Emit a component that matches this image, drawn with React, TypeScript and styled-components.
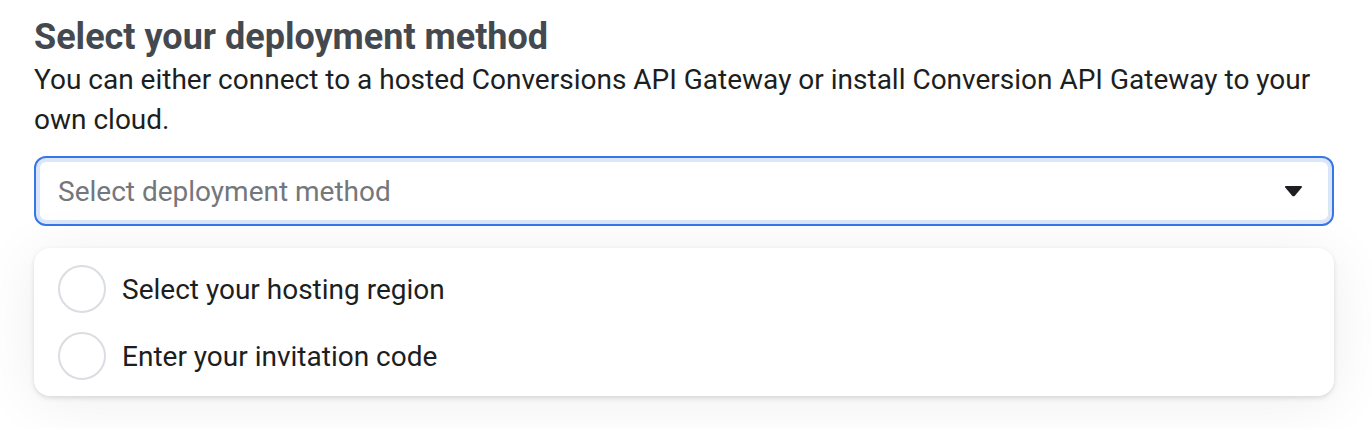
import React from 'react';
import styled, { createGlobalStyle } from 'styled-components';

const Global = createGlobalStyle`
  html, body {
    margin: 0;
    background: #ffffff;
    font-family: Roboto, "Liberation Sans", Arial, sans-serif;
    -webkit-font-smoothing: antialiased;
  }
`;

const Page = styled.div`
  padding: 14px 38px 40px 34px;
  width: 1300px;
`;

const Title = styled.h2`
  margin: 0;
  font-size: 36px;
  line-height: 46px;
  font-weight: 700;
  color: #444950;
`;

const Description = styled.p`
  margin: 0;
  font-size: 28px;
  line-height: 40px;
  color: #1c1e21;
`;

const Select = styled.div`
  margin-top: 16px;
  height: 70px;
  box-sizing: border-box;
  border: 2px solid #3578e5;
  border-radius: 12px;
  box-shadow: inset 0 0 0 4px #dbe6fb;
  display: flex;
  align-items: center;
  justify-content: space-between;
  padding: 0 29px 0 22px;
`;

const Placeholder = styled.span`
  font-size: 28px;
  color: #74777c;
`;

const Menu = styled.div`
  margin-top: 22px;
  background: #ffffff;
  border-radius: 16px;
  box-shadow: 0 2px 5px rgba(0, 0, 0, 0.13), 0 6px 60px rgba(0, 0, 0, 0.07);
  padding: 17px 24px 16px;
  display: flex;
  flex-direction: column;
  gap: 19px;
`;

const Option = styled.label`
  display: flex;
  align-items: center;
  gap: 16px;
  font-size: 28px;
  color: #1c1e21;
  height: 48px;
`;

const Radio = styled.span`
  width: 48px;
  height: 48px;
  box-sizing: border-box;
  border-radius: 50%;
  border: 2px solid #dadde1;
  background: #ffffff;
`;

const options = ['Select your hosting region', 'Enter your invitation code'];

export default function App() {
  return (
    <Page>
      <Global />
      <Title>Select your deployment method</Title>
      <Description>
        You can either connect to a hosted Conversions API Gateway or install Conversion API Gateway to your own cloud.
      </Description>
      <Select>
        <Placeholder>Select deployment method</Placeholder>
        <svg width="19" height="11" viewBox="0 0 20 12">
          <path d="M1 1.5 Q0 0 2 0 H18 Q20 0 19 1.5 L11.5 10.5 Q10 12 8.5 10.5 Z" fill="#1c1e21" />
        </svg>
      </Select>
      <Menu>
        {options.map((o) => (
          <Option key={o}>
            <Radio />
            {o}
          </Option>
        ))}
      </Menu>
    </Page>
  );
}
